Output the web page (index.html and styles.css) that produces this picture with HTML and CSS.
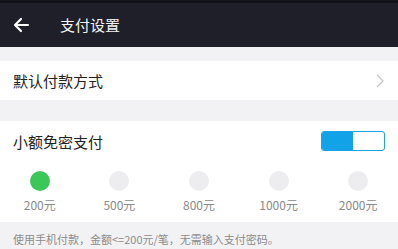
FILE: index.html
```html
<!DOCTYPE html>
<html>
<head>
<meta charset="utf-8">
<link rel="stylesheet" href="styles.css">
</head>
<body>
<div class="topbar">
  <svg class="back" width="18" height="16" viewBox="0 0 18 16"><path d="M16 8H3M9 2L3 8l6 6" fill="none" stroke="#fff" stroke-width="2.2" stroke-linecap="round" stroke-linejoin="round"/></svg>
  <span class="title">支付设置</span>
</div>
<div class="gap1"></div>
<div class="row">
  <span class="label">默认付款方式</span>
  <svg class="chev" width="8" height="14" viewBox="0 0 8 14"><path d="M1 1l6 6-6 6" fill="none" stroke="#c8c8cc" stroke-width="1.3"/></svg>
</div>
<div class="gap2"></div>
<div class="section">
  <div class="row2">
    <span class="label">小额免密支付</span>
    <div class="toggle"><div class="on"></div></div>
  </div>
  <div class="amounts">
    <div class="amt"><div class="dot active"></div><span>200元</span></div>
    <div class="amt"><div class="dot"></div><span>500元</span></div>
    <div class="amt"><div class="dot"></div><span>800元</span></div>
    <div class="amt"><div class="dot"></div><span>1000元</span></div>
    <div class="amt"><div class="dot"></div><span>2000元</span></div>
  </div>
</div>
<div class="footer">使用手机付款，金额&lt;=200元/笔，无需输入支付密码。</div>
</body>
</html>
```
FILE: styles.css
```css
html, body { margin: 0; padding: 0; }
body {
  width: 398px; height: 249px; overflow: hidden;
  background: #f2f2f4;
  font-family: "Noto Sans CJK SC", "Noto Sans", sans-serif;
}
.topbar {
  height: 47px; background: #1e1f28;
  border-top: 3px solid #121319; box-sizing: border-box;
  display: flex; align-items: center;
}
.back { margin-left: 12px; margin-top: -1px; }
.title { color: #f4f4f4; font-size: 15px; margin-left: 30px; margin-top: -1px; }
.gap1 { height: 14px; }
.row {
  height: 39px; background: #fff;
  display: flex; align-items: center; justify-content: space-between;
  padding: 0 14px 0 13px;
}
.label { font-size: 15px; color: #222; }
.gap2 { height: 21px; }
.section { background: #fff; height: 101px; }
.row2 {
  height: 40px; display: flex; align-items: center; justify-content: space-between;
  padding: 0 13px 0 13px;
}
.toggle {
  width: 62px; height: 18px; border: 1.5px solid #1aa3e6; border-radius: 3px;
  display: flex; overflow: hidden; background: #fff;
}
.on { width: 31px; background: #12a2e8; }
.amounts { display: grid; grid-template-columns: repeat(5, 1fr); padding-top: 10px; }
.amt { display: flex; flex-direction: column; align-items: center; }
.dot { width: 20px; height: 20px; border-radius: 50%; background: #ededef; }
.dot.active { background: #3cc759; }
.amt span { font-size: 12px; color: #8a8a8a; margin-top: 7px; line-height: 14px; }
.footer {
  font-size: 11px; line-height: 16px; color: #8c8c8c; padding: 9px 0 0 13px;
}
```
